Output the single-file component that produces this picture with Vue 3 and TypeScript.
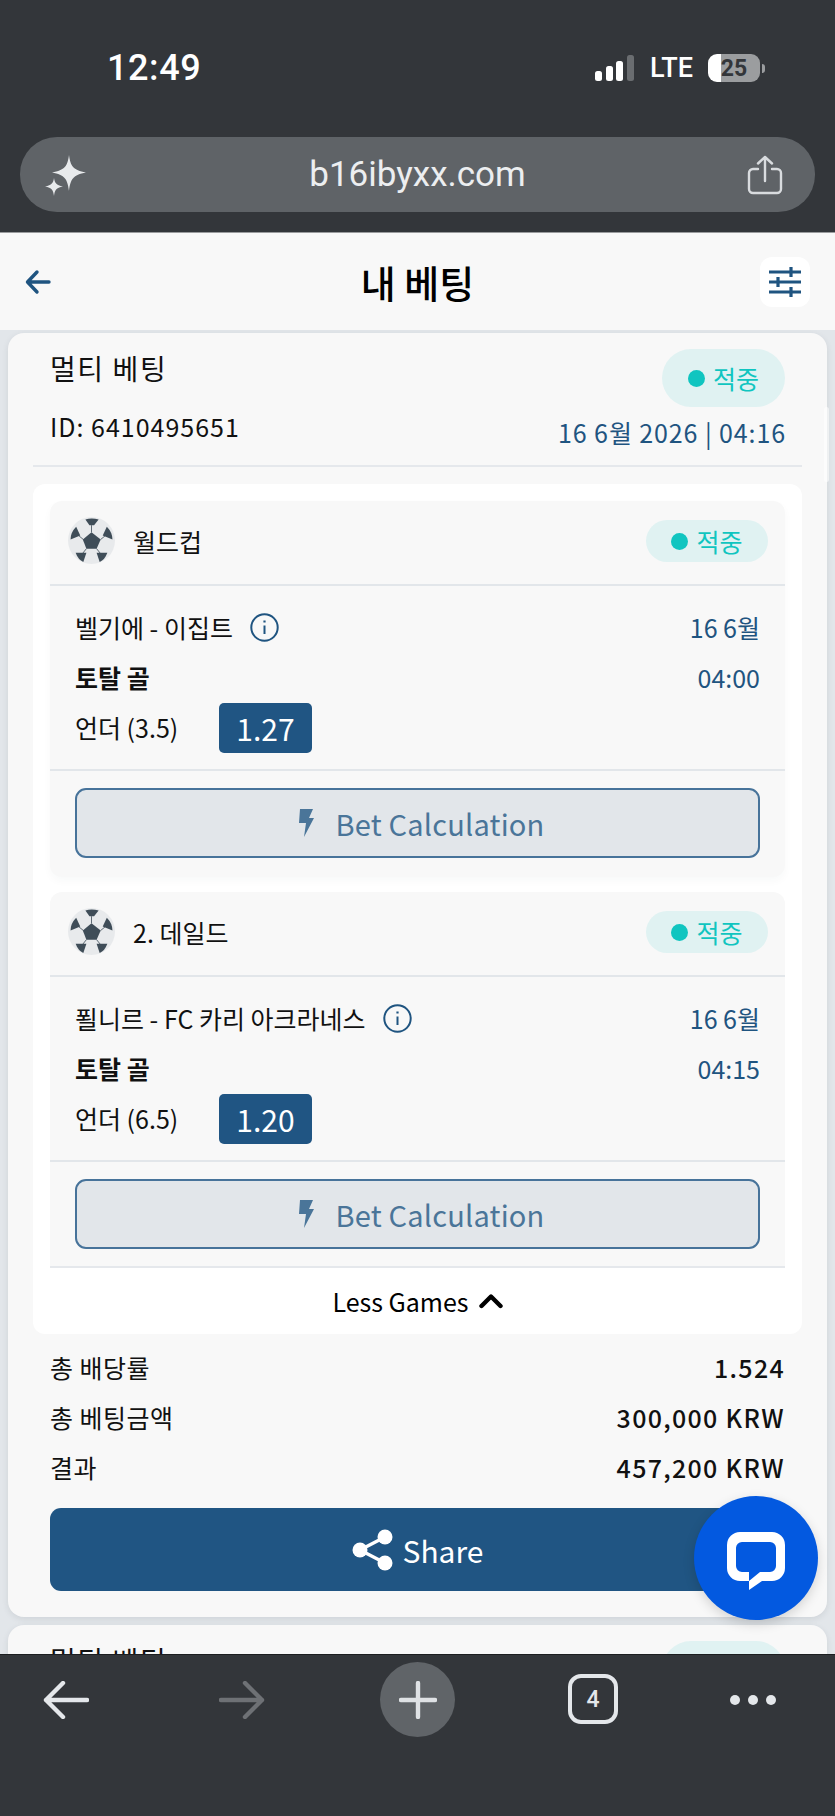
<script setup lang="ts">
interface Game {
  league: string
  match: string
  date: string
  time: string
  pick: string
  odds: string
}

const games: Game[] = [
  { league: '월드컵', match: '벨기에 - 이집트', date: '16 6월', time: '04:00', pick: '언더 (3.5)', odds: '1.27' },
  { league: '2. 데일드', match: '푈니르 - FC 카리 아크라네스', date: '16 6월', time: '04:15', pick: '언더 (6.5)', odds: '1.20' },
]

const totals = [
  { label: '총 배당률', value: '1.524' },
  { label: '총 베팅금액', value: '300,000 KRW' },
  { label: '결과', value: '457,200 KRW' },
]
</script>

<template>
  <div class="phone">
    <div class="top-chrome">
      <div class="status">
        <span class="clock">12:49</span>
        <div class="status-right">
          <svg class="signal" width="39" height="26" viewBox="0 0 39 26">
            <rect x="0" y="16" width="7" height="10" rx="2.5" fill="#fff" />
            <rect x="11" y="11" width="7" height="15" rx="2.5" fill="#fff" />
            <rect x="21" y="6" width="7" height="20" rx="2.5" fill="#fff" />
            <rect x="32" y="0" width="7" height="26" rx="2.5" fill="#6a6d70" />
          </svg>
          <span class="lte">LTE</span>
          <div class="battery"><span>25</span></div>
          <i class="battery-nub"></i>
        </div>
      </div>
      <div class="address">
        <svg class="sparkle" width="44" height="44" viewBox="0 0 44 44" fill="#e8eaec">
          <path d="M25 2 C26.5 13 29 17 42 19.5 C29 22 26.5 26 25 38 C23.5 26 21 22 8 19.5 C21 17 23.5 13 25 2Z" />
          <path d="M10 25 C10.8 30 12 32 19 33.5 C12 35 10.8 37 10 43 C9.2 37 8 35 1 33.5 C8 32 9.2 30 10 25Z" />
        </svg>
        <span class="url">b16ibyxx.com</span>
        <svg class="share-out" width="36" height="40" viewBox="0 0 36 40" fill="none" stroke="#d9dcdf" stroke-width="2.4" stroke-linecap="round" stroke-linejoin="round">
          <path d="M11 14 H6 a4 4 0 0 0 -4 4 V34 a4 4 0 0 0 4 4 H30 a4 4 0 0 0 4 -4 V18 a4 4 0 0 0 -4 -4 H25" />
          <path d="M18 26 V2 M11 8.5 L18 2 L25 8.5" />
        </svg>
      </div>
    </div>

    <header class="page-head">
      <svg class="back" width="26" height="26" viewBox="0 0 26 26" fill="none" stroke="#1f5480" stroke-width="3.4" stroke-linecap="round" stroke-linejoin="round">
        <path d="M24 13 H3 M12 3 L2.5 13 L12 23" />
      </svg>
      <h1>내 베팅</h1>
      <div class="filter-btn">
        <svg width="34" height="34" viewBox="0 0 34 34" fill="none" stroke="#1f5480" stroke-width="3.2">
          <path d="M1 7 H33 M23 2 V12 M1 17 H33 M10 12 V22 M1 27 H33 M23 22 V32" />
        </svg>
      </div>
    </header>

    <main class="content">
      <section class="card">
        <div class="card-head">
          <div class="head-left">
            <div class="title">멀티 베팅</div>
            <div class="bet-id">ID: 6410495651</div>
          </div>
          <div class="head-right">
            <div class="pill pill-large"><i></i>적중</div>
            <div class="bet-date">16 6월 2026 | 04:16</div>
          </div>
        </div>

        <div class="games">
          <article v-for="(game, i) in games" :key="game.match" class="game" :class="{ last: i === games.length - 1 }">
            <div class="game-head">
              <svg class="ball" width="47" height="47" viewBox="0 0 46 46">
                <circle cx="23" cy="23" r="23" fill="#e8eaec" />
                <g stroke="#3f4d58" stroke-width="0.8">
                  <path d="M23 15 V8 M32 22 L38 17 M28 31 L32 36 M18 31 L14 36 M15 22 L9 17" />
                </g>
                <g fill="#3f4d58">
                  <path d="M23 15 L32 22 L28 31 L18 31 L14.5 22Z" />
                  <path d="M17 2.5 Q23 0.5 30 2.5 L25.5 8 L21 8Z" />
                  <path d="M8 9.5 L12 18 L2.5 22 Q2.5 15 8 9.5Z" />
                  <path d="M38 9.5 L34 18 L43.5 22 Q43.5 15 38 9.5Z" />
                  <path d="M7.5 35 L18 35 L15 44 Q10 42 7.5 35Z" />
                  <path d="M38.5 35 L28 35 L31 44 Q36 42 38.5 35Z" />
                </g>
              </svg>
              <span class="league">{{ game.league }}</span>
              <div class="pill"><i></i>적중</div>
            </div>

            <div class="game-body">
              <div class="row">
                <span class="match">{{ game.match }}</span>
                <svg class="info" width="29" height="29" viewBox="0 0 29 29" fill="none" stroke="#1f5480">
                  <circle cx="14.5" cy="14.5" r="13.2" stroke-width="2" />
                  <path d="M14.5 12.5 V21" stroke-width="2" />
                  <path d="M14.5 7.5 V9.5" stroke-width="2.2" />
                </svg>
                <span class="when">{{ game.date }}</span>
              </div>
              <div class="row">
                <span class="market">토탈 골</span>
                <span class="when">{{ game.time }}</span>
              </div>
              <div class="row">
                <span class="pick">{{ game.pick }}</span>
                <span class="odds">{{ game.odds }}</span>
              </div>
            </div>

            <div class="game-foot">
              <button class="calc" type="button">
                <svg width="16" height="28" viewBox="0 0 16 28" fill="#4a7599">
                  <path d="M2 0 H15 L11 9 H16 L6 28 L8 14 H1Z" />
                </svg>
                <span>Bet Calculation</span>
              </button>
            </div>
          </article>

          <div class="less">
            <span>Less Games</span>
            <svg width="24" height="16" viewBox="0 0 24 16" fill="none" stroke="#000" stroke-width="4.4" stroke-linecap="round" stroke-linejoin="round">
              <path d="M2.5 13 L12 3.5 L21.5 13" />
            </svg>
          </div>
        </div>

        <div class="totals">
          <div v-for="t in totals" :key="t.label" class="total-row">
            <span>{{ t.label }}</span>
            <strong>{{ t.value }}</strong>
          </div>
        </div>

        <button class="share" type="button">
          <svg width="42" height="42" viewBox="0 0 42 42" fill="#fff" stroke="#fff">
            <path d="M33 8 L8 21 L33 34" fill="none" stroke-width="3.4" />
            <circle cx="33" cy="8" r="7.5" stroke="none" />
            <circle cx="8" cy="21" r="7.5" stroke="none" />
            <circle cx="33" cy="34" r="7.5" stroke="none" />
          </svg>
          <span>Share</span>
        </button>
      </section>

      <section class="card">
        <div class="card-head">
          <div class="head-left">
            <div class="title">멀티 베팅</div>
          </div>
          <div class="head-right">
            <div class="pill pill-large"><i></i>적중</div>
          </div>
        </div>
      </section>

      <i class="scroll-thumb"></i>

      <div class="chat">
        <svg width="58" height="58" viewBox="0 0 58 58">
          <path fill="#fff" fill-rule="evenodd" d="M13 0 H45 A13 13 0 0 1 58 13 V36 A13 13 0 0 1 45 49 H35 L22 58 V49 H13 A13 13 0 0 1 0 36 V13 A13 13 0 0 1 13 0Z M15 10 A6 6 0 0 0 9 16 V34 A6 6 0 0 0 15 40 H22 V49 L33 40 H43 A6 6 0 0 0 49 34 V16 A6 6 0 0 0 43 10Z" />
        </svg>
      </div>
    </main>

    <nav class="bottom-bar">
      <svg class="nav-back" width="46" height="38" viewBox="0 0 46 38" fill="none" stroke="#e4e7ea" stroke-width="4.4" stroke-linecap="round" stroke-linejoin="round">
        <path d="M44 19 H3 M20 2 L3 19 L20 36" />
      </svg>
      <svg class="nav-forward" width="46" height="38" viewBox="0 0 46 38" fill="none" stroke="#6e7175" stroke-width="4.4" stroke-linecap="round" stroke-linejoin="round">
        <path d="M2 19 H43 M26 2 L43 19 L26 36" />
      </svg>
      <div class="nav-plus">
        <svg width="38" height="38" viewBox="0 0 38 38" fill="none" stroke="#dfe2e5" stroke-width="4.4" stroke-linecap="round">
          <path d="M19 2 V36 M2 19 H36" />
        </svg>
      </div>
      <div class="nav-tabs">4</div>
      <div class="nav-more"><i></i><i></i><i></i></div>
    </nav>
  </div>
</template>

<style>
html,
body {
  margin: 0;
  background: #33363a;
}
</style>

<style scoped>
.phone {
  width: 835px;
  height: 1816px;
  display: flex;
  flex-direction: column;
  overflow: hidden;
  font-family: "Noto Sans CJK KR", "Noto Sans", sans-serif;
  background: #e2e6ea;
  color: #111;
}

.top-chrome {
  height: 233px;
  flex: none;
  box-sizing: border-box;
  padding-top: 48px;
  background: #33363a;
  border-bottom: 1px solid #9a9c9e;
}

.status {
  height: 40px;
  display: flex;
  align-items: center;
  padding: 0 70px 0 107px;
}

.clock {
  font-family: Roboto, sans-serif;
  font-weight: 500;
  font-size: 36px;
  color: #fff;
  letter-spacing: 0.6px;
}

.status-right {
  margin-left: auto;
  display: flex;
  align-items: center;
}

.lte {
  margin-left: 16px;
  font-family: Roboto, sans-serif;
  font-weight: 500;
  font-size: 27px;
  color: #fff;
}

.battery {
  margin-left: 15px;
  width: 52px;
  height: 28px;
  border-radius: 9px;
  background: linear-gradient(90deg, #fff 0 25%, #9b9d9f 25% 100%);
  display: flex;
  align-items: center;
  justify-content: center;
  font-family: Roboto, sans-serif;
  font-weight: 700;
  font-size: 23px;
  color: #33363a;
}

.battery-nub {
  width: 3px;
  height: 9px;
  margin-left: 2px;
  border-radius: 0 3px 3px 0;
  background: #9b9d9f;
}

.address {
  height: 75px;
  margin: 49px 20px 0;
  padding: 0 32px 0 24px;
  border-radius: 37px;
  background: #5f6367;
  display: flex;
  align-items: center;
  justify-content: space-between;
}

.url {
  font-family: Roboto, sans-serif;
  font-size: 35px;
  color: #eceef0;
}

.page-head {
  height: 97px;
  flex: none;
  box-sizing: border-box;
  padding: 0 25px;
  background: #f8f8f8;
  display: flex;
  align-items: center;
  justify-content: space-between;
}

.page-head h1 {
  margin: 0 0 0 24px;
  font-size: 38px;
  font-weight: 500;
  color: #000;
}

.filter-btn {
  width: 50px;
  height: 50px;
  border-radius: 12px;
  background: #fff;
  display: flex;
  align-items: center;
  justify-content: center;
}

.content {
  position: relative;
  flex: 1;
  min-height: 0;
  padding-top: 3px;
  overflow: hidden;
}

.card {
  margin: 0 8px 8px;
  padding: 16px 25px 26px;
  border-radius: 16px;
  background: #f8f8f8;
  box-shadow: 0 2px 6px rgba(40, 50, 60, 0.1);
}

.card-head {
  display: flex;
  justify-content: space-between;
  padding: 0 17px 12px;
  border-bottom: 2px solid #e5e8ec;
}

.title {
  height: 40px;
  line-height: 38px;
  font-size: 28px;
  letter-spacing: 1.6px;
}

.bet-id {
  margin-top: 18px;
  height: 40px;
  line-height: 38px;
  font-size: 25px;
  letter-spacing: 1px;
}

.head-right {
  display: flex;
  flex-direction: column;
  align-items: flex-end;
}

.bet-date {
  margin-top: 6px;
  height: 40px;
  line-height: 38px;
  font-size: 25px;
  letter-spacing: 0.9px;
  margin-right: -1px;
  color: #1f5480;
}

.pill {
  height: 42px;
  width: 122px;
  box-sizing: border-box;
  border-radius: 21px;
  background: #e0f2f2;
  color: #10c5c0;
  font-size: 25px;
  display: flex;
  align-items: center;
  justify-content: center;
  gap: 8px;
}

.pill i {
  width: 17px;
  height: 17px;
  border-radius: 50%;
  background: #10c5c0;
}

.pill-large {
  height: 58px;
  width: 123px;
  border-radius: 29px;
}

.games {
  margin-top: 17px;
  padding: 17px 17px 0;
  border-radius: 12px;
  background: #fff;
}

.game {
  border-radius: 12px;
  background: #f8f8f8;
  box-shadow: 0 4px 8px rgba(40, 50, 60, 0.03);
  margin-bottom: 15px;
}

.game.last {
  margin-bottom: 0;
  border-radius: 12px 12px 0 0;
  border-bottom: 2px solid #e5e8ec;
  box-shadow: none;
}

.game-head {
  height: 85px;
  padding: 0 17px 3px 18px;
  box-sizing: border-box;
  display: flex;
  align-items: center;
  border-bottom: 2px solid #e2e6ea;
}

.ball {
  flex: none;
  margin-top: -1px;
}

.league {
  margin-left: 18px;
  margin-right: auto;
  font-size: 25px;
}

.game-body {
  padding: 17px 25px 16px 25px;
  border-bottom: 2px solid #e2e6ea;
}

.row {
  height: 50px;
  display: flex;
  align-items: center;
  font-size: 25px;
}

.row > span:not(.odds) {
  margin-top: -2px;
}

.info {
  margin-left: 17px;
  margin-top: -1px;
}

.when {
  margin-left: auto;
  color: #1f5480;
}

.market {
  font-weight: 700;
}

.pick {
  width: 144px;
}

.odds {
  width: 93px;
  height: 50px;
  border-radius: 5px;
  background: #205583;
  color: #fff;
  font-size: 30px;
  display: flex;
  align-items: center;
  justify-content: center;
}

.game-foot {
  padding: 17px 25px 19px;
}

.game.last .game-foot {
  padding-bottom: 17px;
}

.calc {
  width: 100%;
  height: 70px;
  box-sizing: border-box;
  padding: 0 0 0 7px;
  border: 2px solid #47739a;
  border-radius: 11px;
  background: #e2e6ea;
  color: #4a7599;
  font-family: inherit;
  font-size: 29px;
  letter-spacing: 0.2px;
  display: flex;
  align-items: center;
  justify-content: center;
  gap: 22px;
}

.less {
  height: 66px;
  display: flex;
  align-items: center;
  justify-content: center;
  gap: 10px;
  font-size: 25px;
  color: #000;
}

.totals {
  padding: 8px 17px 1px;
}

.total-row {
  height: 50px;
  display: flex;
  align-items: center;
  justify-content: space-between;
  font-size: 25px;
  letter-spacing: 0.5px;
}

.total-row strong {
  font-weight: 500;
  letter-spacing: 1.3px;
}

.share {
  display: flex;
  align-items: center;
  justify-content: center;
  gap: 9px;
  width: calc(100% - 34px);
  height: 83px;
  margin: 15px 17px 0;
  border: none;
  border-radius: 11px;
  background: #205583;
  color: #fff;
  font-family: inherit;
  font-size: 30px;
}

.scroll-thumb {
  position: absolute;
  left: 824px;
  top: 77px;
  width: 5px;
  height: 75px;
  border-radius: 3px;
  background: rgba(255, 255, 255, 0.55);
}

.chat {
  position: absolute;
  left: 694px;
  top: 1166px;
  width: 124px;
  height: 124px;
  border-radius: 50%;
  background: #0359e0;
  box-shadow: 0 4px 12px rgba(0, 0, 0, 0.15);
  display: flex;
  align-items: center;
  justify-content: center;
}

.chat svg {
  margin-top: 6px;
}

.bottom-bar {
  height: 162px;
  flex: none;
  box-sizing: border-box;
  border-top: 1px solid #1c1e20;
  background: #33363a;
  display: flex;
  align-items: flex-start;
  padding-left: 43px;
}

.bottom-bar > * {
  margin-top: 26px;
}

.nav-forward {
  margin-left: 130px;
}

.nav-plus {
  width: 75px;
  height: 75px;
  margin-top: 7px;
  margin-left: 115px;
  border-radius: 50%;
  background: #606468;
  display: flex;
  align-items: center;
  justify-content: center;
}

.nav-tabs {
  width: 50px;
  height: 50px;
  margin-top: 19px;
  margin-left: 113px;
  box-sizing: border-box;
  border: 4px solid #e4e7ea;
  border-radius: 13px;
  color: #e4e7ea;
  font-family: Roboto, sans-serif;
  font-weight: 500;
  font-size: 23px;
  display: flex;
  align-items: center;
  justify-content: center;
}

.nav-more {
  margin-left: 112px;
  height: 38px;
  display: flex;
  align-items: center;
  gap: 8px;
}

.nav-more i {
  width: 10px;
  height: 10px;
  border-radius: 50%;
  background: #e4e7ea;
}
</style>
